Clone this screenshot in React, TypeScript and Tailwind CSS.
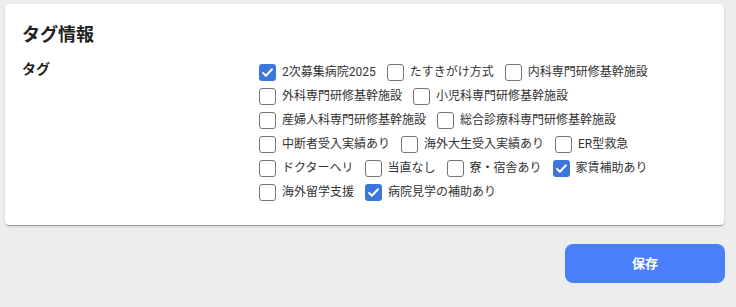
import React from 'react';

type Tag = { label: string; checked?: boolean };

const rows: Tag[][] = [
  [{ label: '2次募集病院2025', checked: true }, { label: 'たすきがけ方式' }, { label: '内科専門研修基幹施設' }],
  [{ label: '外科専門研修基幹施設' }, { label: '小児科専門研修基幹施設' }],
  [{ label: '産婦人科専門研修基幹施設' }, { label: '総合診療科専門研修基幹施設' }],
  [{ label: '中断者受入実績あり' }, { label: '海外大生受入実績あり' }, { label: 'ER型救急' }],
  [{ label: 'ドクターヘリ' }, { label: '当直なし' }, { label: '寮・宿舎あり' }, { label: '家賃補助あり', checked: true }],
  [{ label: '海外留学支援' }, { label: '病院見学の補助あり', checked: true }],
];

function Checkbox({ checked }: { checked?: boolean }) {
  if (checked) {
    return (
      <span className="flex h-[17px] w-[17px] items-center justify-center rounded-[3px] bg-[#3b76de]">
        <svg width="13" height="13" viewBox="0 0 16 16" fill="none">
          <path d="M2.5 8.5l3.5 3.5 7.5-8" stroke="white" strokeWidth="2.4" strokeLinecap="round" strokeLinejoin="round" />
        </svg>
      </span>
    );
  }
  return <span className="h-[17px] w-[17px] rounded-[3px] border border-[#767676] bg-white" />;
}

export default function App() {
  return (
    <div className="min-h-[307px] bg-[#ededed] pl-[5px] pt-[4px] font-['Roboto','Noto_Sans_CJK_JP',sans-serif] text-[#222]">
      <div className="w-[719px] rounded-[4px] bg-white px-[17px] pb-[21px] pt-[18px] shadow-[0_2px_1px_-1px_rgba(0,0,0,0.2),0_1px_1px_0_rgba(0,0,0,0.14),0_1px_3px_0_rgba(0,0,0,0.12)]">
        <h2 className="mb-[12px] text-[18px] font-bold leading-[26px]">タグ情報</h2>
        <div className="flex">
          <div className="w-[237px] shrink-0 text-[14px] font-bold leading-[18px]">タグ</div>
          <div className="flex flex-col">
            {rows.map((row, i) => (
              <div key={i} className="flex h-6 items-center">
                {row.map((t) => (
                  <label key={t.label} className="mr-[11px] flex items-center">
                    <Checkbox checked={t.checked} />
                    <span className="ml-[6px] whitespace-nowrap text-[12px] text-[#333]">{t.label}</span>
                  </label>
                ))}
              </div>
            ))}
          </div>
        </div>
      </div>
      <div className="flex w-[720px] justify-end pt-[19px]">
        <button className="h-[39px] w-[160px] rounded-[8px] bg-[#4a7ffc] text-[13px] font-bold text-white">保存</button>
      </div>
    </div>
  );
}
